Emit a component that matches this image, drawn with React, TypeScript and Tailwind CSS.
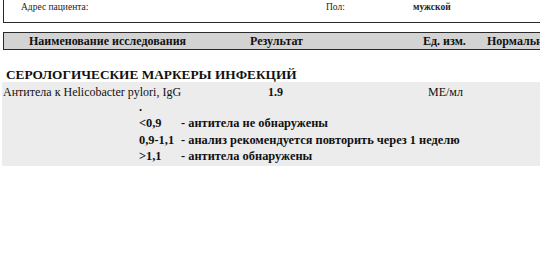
import React from "react";

export default function App() {
  return (
    <div className="w-[540px] h-[256px] bg-white overflow-hidden text-black font-['Liberation_Serif','Times_New_Roman',serif]">
      <div className="ml-[3px] h-[23px] border-l-[1.5px] border-b-[1.5px] border-[#2a2a2a] flex items-start pt-[2px] text-[9.5px] leading-[11px] text-[#222] whitespace-nowrap">
        <div className="w-[322px] shrink-0 pl-[17px]">Адрес пациента:</div>
        <div className="w-[87px] shrink-0">Пол:</div>
        <div className="font-bold">мужской</div>
      </div>

      <div className="mt-[9px] ml-[3px] h-[18px] border-y-[1.5px] border-l-[1.5px] border-[#2a2a2a] bg-[#d3d3d3] flex items-center text-[12px] font-bold whitespace-nowrap text-[#111] overflow-hidden">
        <div className="w-[246px] shrink-0 pl-[25px]">Наименование исследования</div>
        <div className="w-[173px] shrink-0">Результат</div>
        <div className="w-[64px] shrink-0">Ед. изм.</div>
        <div className="shrink-0">Нормальные значения</div>
      </div>

      <div className="mt-[18px] pl-[6px] text-[13.3px] leading-[14px] font-bold text-[#111] whitespace-nowrap">
        СЕРОЛОГИЧЕСКИЕ МАРКЕРЫ ИНФЕКЦИЙ
      </div>

      <div className="ml-[2px] h-[84px] bg-[#ececec] text-[#111]">
        <div className="flex text-[12px] leading-[13px] pt-[4px] whitespace-nowrap">
          <div className="w-[266px] shrink-0 pl-[1px]">Антитела к Helicobacter pylori, IgG</div>
          <div className="w-[160px] shrink-0 font-bold">1.9</div>
          <div>МЕ/мл</div>
        </div>
        <div className="pl-[137px] text-[12.4px] font-bold leading-[16.3px] whitespace-nowrap">
          <div>.</div>
          <div className="flex">
            <div className="w-[42px] shrink-0">&lt;0,9</div>
            <div>- антитела не обнаружены</div>
          </div>
          <div className="flex">
            <div className="w-[42px] shrink-0">0,9-1,1</div>
            <div>- анализ рекомендуется повторить через 1 неделю</div>
          </div>
          <div className="flex">
            <div className="w-[42px] shrink-0">&gt;1,1</div>
            <div>- антитела обнаружены</div>
          </div>
        </div>
      </div>
    </div>
  );
}
